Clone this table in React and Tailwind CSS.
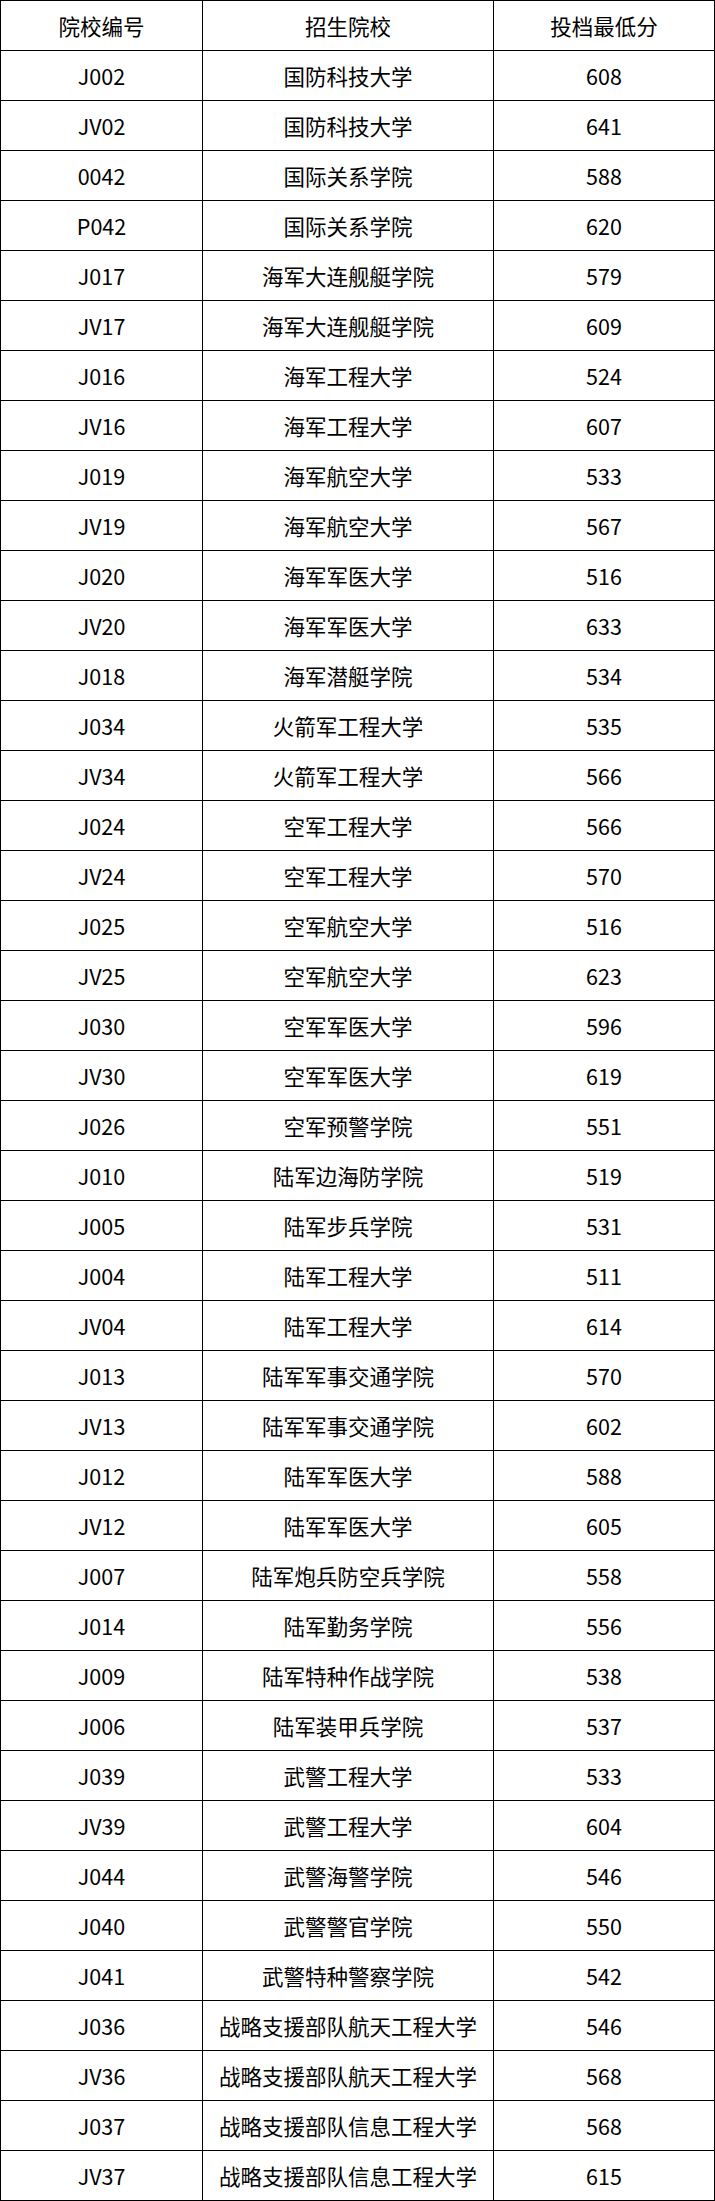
const rows = [
  ["J002", "国防科技大学", "608"],
  ["JV02", "国防科技大学", "641"],
  ["0042", "国际关系学院", "588"],
  ["P042", "国际关系学院", "620"],
  ["J017", "海军大连舰艇学院", "579"],
  ["JV17", "海军大连舰艇学院", "609"],
  ["J016", "海军工程大学", "524"],
  ["JV16", "海军工程大学", "607"],
  ["J019", "海军航空大学", "533"],
  ["JV19", "海军航空大学", "567"],
  ["J020", "海军军医大学", "516"],
  ["JV20", "海军军医大学", "633"],
  ["J018", "海军潜艇学院", "534"],
  ["J034", "火箭军工程大学", "535"],
  ["JV34", "火箭军工程大学", "566"],
  ["J024", "空军工程大学", "566"],
  ["JV24", "空军工程大学", "570"],
  ["J025", "空军航空大学", "516"],
  ["JV25", "空军航空大学", "623"],
  ["J030", "空军军医大学", "596"],
  ["JV30", "空军军医大学", "619"],
  ["J026", "空军预警学院", "551"],
  ["J010", "陆军边海防学院", "519"],
  ["J005", "陆军步兵学院", "531"],
  ["J004", "陆军工程大学", "511"],
  ["JV04", "陆军工程大学", "614"],
  ["J013", "陆军军事交通学院", "570"],
  ["JV13", "陆军军事交通学院", "602"],
  ["J012", "陆军军医大学", "588"],
  ["JV12", "陆军军医大学", "605"],
  ["J007", "陆军炮兵防空兵学院", "558"],
  ["J014", "陆军勤务学院", "556"],
  ["J009", "陆军特种作战学院", "538"],
  ["J006", "陆军装甲兵学院", "537"],
  ["J039", "武警工程大学", "533"],
  ["JV39", "武警工程大学", "604"],
  ["J044", "武警海警学院", "546"],
  ["J040", "武警警官学院", "550"],
  ["J041", "武警特种警察学院", "542"],
  ["J036", "战略支援部队航天工程大学", "546"],
  ["JV36", "战略支援部队航天工程大学", "568"],
  ["J037", "战略支援部队信息工程大学", "568"],
  ["JV37", "战略支援部队信息工程大学", "615"],
];

const header = ["院校编号", "招生院校", "投档最低分"];

function Row({ cells }) {
  return (
    <div className="grid grid-cols-[202px_291px_221px]">
      {cells.map((c, i) => (
        <div
          key={i}
          className="h-[50px] border-r border-b border-black flex items-center justify-center"
        >
          {c}
        </div>
      ))}
    </div>
  );
}

export default function App() {
  return (
    <div
      className="w-[715px] bg-white text-black text-[21.5px] leading-none"
      style={{ fontFamily: '"Noto Sans CJK SC", "Noto Sans", sans-serif' }}
    >
      <div className="border-l border-t border-black">
        <Row cells={header} />
        {rows.map((r, i) => (
          <Row key={i} cells={r} />
        ))}
      </div>
    </div>
  );
}
